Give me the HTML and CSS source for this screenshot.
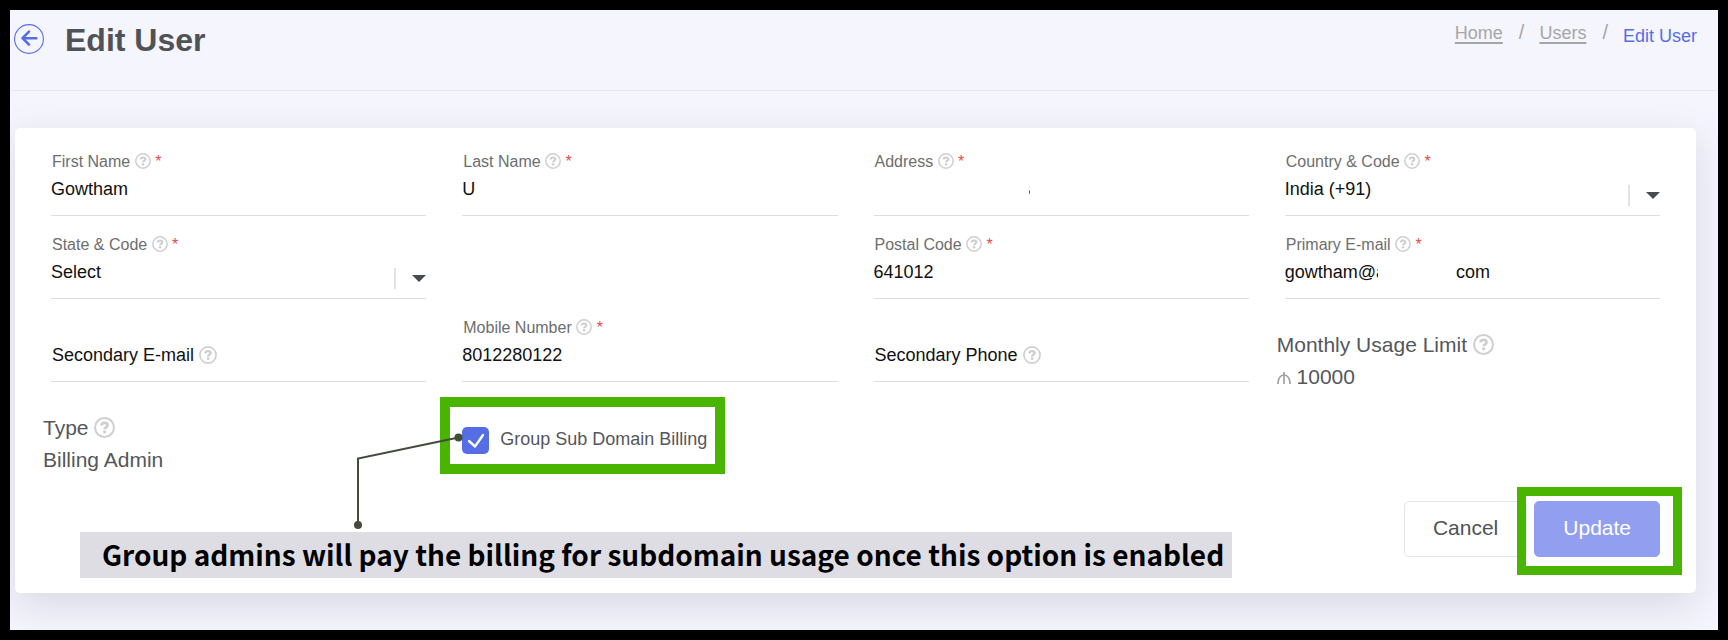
FILE: index.html
```html
<!DOCTYPE html>
<html lang="en">
<head>
<meta charset="utf-8">
<meta name="viewport" content="width=device-width, initial-scale=1">
<title>Edit User</title>
<link rel="stylesheet" href="styles.css">
</head>
<body>
<svg width="0" height="0" class="defs" aria-hidden="true">
  <symbol id="help" viewBox="0 0 16 16">
    <circle cx="8" cy="8" r="7.2" fill="none" stroke="#cfcfcf" stroke-width="1.500"/>
    <path d="M5.700 6.500C5.800 5 6.800 4.500 8 4.500c1.400 0 2.300.7 2.300 1.800 0 1.600-2.200 1.500-2.200 3" fill="none" stroke="#cfcfcf" stroke-width="2.100"/>
    <circle cx="8.100" cy="11.300" r="1.250" fill="#cfcfcf"/>
  </symbol>
</svg>
<header class="topbar">
  <a class="back" href="#" aria-label="Back">
    <svg viewBox="0 0 30 30"><circle cx="15" cy="15" r="14.400" fill="none" stroke="#556ee6" stroke-width="1.100"/><path d="M22.300 14.200H9M15 7.700l-6.500 6.500 6.500 6.500" fill="none" stroke="#556ee6" stroke-width="2.600" stroke-linecap="round" stroke-linejoin="round"/></svg>
  </a>
  <h1 class="title">Edit User</h1>
  <nav class="crumbs" aria-label="Breadcrumb">
    <a href="#">Home</a><span class="slash">/</span><a href="#">Users</a><span class="slash">/</span><span class="current">Edit User</span>
  </nav>
</header>
<main>
  <form class="card">
    <div class="fields">
      <div class="field">
        <label for="first">First Name <svg class="help"><use href="#help"/></svg> <b>*</b></label>
        <input id="first" type="text" value="Gowtham">
      </div>
      <div class="field">
        <label for="last">Last Name <svg class="help"><use href="#help"/></svg> <b>*</b></label>
        <input id="last" type="text" value="U">
      </div>
      <div class="field masked masked-address">
        <label for="address">Address <svg class="help"><use href="#help"/></svg> <b>*</b></label>
        <input id="address" type="text" value="                               a">
      </div>
      <div class="field select">
        <label for="country">Country &amp; Code <svg class="help"><use href="#help"/></svg> <b>*</b></label>
        <select id="country"><option>India (+91)</option></select>
      </div>
      <div class="field select">
        <label for="state">State &amp; Code <svg class="help"><use href="#help"/></svg> <b>*</b></label>
        <select id="state"><option>Select</option></select>
      </div>
      <div class="field third">
        <label for="postal">Postal Code <svg class="help"><use href="#help"/></svg> <b>*</b></label>
        <input id="postal" type="text" value="641012">
      </div>
      <div class="field masked masked-email">
        <label for="email">Primary E-mail <svg class="help"><use href="#help"/></svg> <b>*</b></label>
        <input id="email" type="text" value="gowtham@a              com">
      </div>
      <div class="field empty">
        <label for="email2">Secondary E-mail <svg class="help"><use href="#help"/></svg></label>
        <input id="email2" type="text">
      </div>
      <div class="field">
        <label for="mobile">Mobile Number <svg class="help"><use href="#help"/></svg> <b>*</b></label>
        <input id="mobile" type="text" value="8012280122">
      </div>
      <div class="field empty">
        <label for="phone2">Secondary Phone <svg class="help"><use href="#help"/></svg></label>
        <input id="phone2" type="text">
      </div>
      <div class="info usage">
        <div>Monthly Usage Limit <svg class="help"><use href="#help"/></svg></div>
        <div><svg class="coin" viewBox="0 0 14 12"><path d="M1 12C.8 7 3.200 3 7 3s6.200 4 6 9M7 0v12" fill="none" stroke="#a0a0a0" stroke-width="1.700"/></svg> 10000</div>
      </div>
      <div class="info">
        <div>Type <svg class="help"><use href="#help"/></svg></div>
        <div>Billing Admin</div>
      </div>
      <label class="check"><input type="checkbox" checked><span>Group Sub Domain Billing</span></label>
    </div>
    <div class="actions">
      <button type="button" class="btn">Cancel</button>
      <span class="marked"><button type="submit" class="btn primary">Update</button></span>
    </div>
    <svg class="connector" viewBox="0 0 114 98" aria-hidden="true"><path d="M105.500 6.500L5 27.500V91" fill="none" stroke="#434b3b" stroke-width="2"/><circle cx="105.500" cy="6.500" r="4" fill="#434b3b"/><circle cx="5" cy="94" r="4" fill="#434b3b"/></svg>
    <p class="note">Group admins will pay the billing for subdomain usage once this option is enabled</p>
  </form>
</main>
</body>
</html>
```
FILE: styles.css
```css
* { box-sizing: border-box; }
body {
  margin: 0;
  min-height: 100vh;
  border: 10px solid #000;
  background: #f5f5fe;
  color: #55575c;
  font-family: "Liberation Sans", Arial, sans-serif;
  font-size: 18px;
  overflow: hidden;
}
.defs { position: absolute; }
.topbar {
  display: flex;
  align-items: flex-start;
  height: 81px;
  padding: 10px 21px 0 4px;
  border-bottom: 1px solid #e6e7ef;
}
.back { width: 30px; height: 30px; margin-top: 4px; }
.back svg { display: block; width: 30px; height: 30px; }
.title {
  margin: 0 auto 0 21px;
  color: #505356;
  font-size: 32px;
  line-height: 40px;
}
.crumbs { display: flex; line-height: 26px; }
.crumbs a { color: #a6a6a6; text-underline-offset: 3px; text-decoration-thickness: 2px; }
.slash { padding: 0 15px 0 16px; color: #a6a6a6; font-size: 20px; line-height: 24px; }
.current { padding-top: 3px; color: #556ee6; }
main { padding: 37px 22px 37px 5px; }
.card {
  position: relative;
  padding: 5px 36px 36px;
  border-radius: 5px;
  background: #fff;
  box-shadow: 0 12px 40px rgba(18, 20, 30, 0.13);
}
.fields {
  display: grid;
  grid-template-columns: repeat(4, minmax(0, 1fr));
  grid-template-rows: repeat(3, 83px) auto;
  column-gap: 36px;
}
.field {
  position: relative;
  display: grid;
  grid-template-rows: 20px 1fr;
  row-gap: 3px;
  padding-top: 19px;
  border-bottom: 1px solid #dcdfe2;
}
.field label {
  padding-left: 1px;
  color: #6e6e6e;
  font-size: 16px;
  line-height: 20px;
}
.field b { color: #e64b4b; font-weight: 400; }
.field input, .field select {
  width: 100%;
  height: 28px;
  margin: 0;
  padding: 0;
  border: 0;
  background: transparent;
  color: #111;
  font: inherit;
  line-height: 28px;
  appearance: none;
}
.third { grid-column: 3; }
.empty label, .empty input { grid-area: 2 / 1; }
.field.empty label { color: #111; font-size: 18px; line-height: 28px; }
.help { width: 16px; height: 16px; vertical-align: -2px; }
.empty .help { width: 18px; height: 18px; vertical-align: -3px; }
.select::before {
  content: "";
  position: absolute;
  right: 30px;
  bottom: 9px;
  width: 2px;
  height: 21px;
  background: #e2e2e2;
}
.select::after {
  content: "";
  position: absolute;
  right: 0;
  bottom: 16px;
  border: 7px solid transparent;
  border-top-color: #484b4e;
  border-bottom: 0;
}
.masked::after {
  content: "";
  position: absolute;
  top: 44px;
  height: 26px;
  background: #fff;
}
.masked-address::after { left: 156px; width: 12px; }
.masked-email::after { left: 93px; width: 72px; }
.info { margin-left: -8px; padding-top: 30px; font-size: 21px; line-height: 32px; }
.info .help { width: 21px; height: 21px; vertical-align: -3px; }
.usage { grid-row: 3 / span 2; grid-column: 4; }
.coin { width: 14px; height: 12px; }
.check {
  position: relative;
  display: flex;
  align-items: center;
  justify-self: start;
  gap: 11px;
  height: 27px;
  margin-top: 45px;
}
.check span { line-height: 28px; padding-bottom: 4px; }
.check input {
  width: 27px;
  height: 27px;
  margin: 0;
  border-radius: 5px;
  appearance: none;
  background: #556ee6;
}
.check input:checked {
  background: #556ee6 url("data:image/svg+xml,%3Csvg xmlns='http://www.w3.org/2000/svg' viewBox='0 0 27 27'%3E%3Cpath d='M7 14l6 5.500L21 8' fill='none' stroke='white' stroke-width='2.400' stroke-linecap='round' stroke-linejoin='round'/%3E%3C/svg%3E") center / 27px;
}
.check::before, .marked::after {
  content: "";
  position: absolute;
  pointer-events: none;
  border: 9px solid #49b500;
}
.check::before { inset: -30px -18px -20px -22px; border-width: 10px; }
.marked { position: relative; }
.marked::after { inset: -14px -22px -18px -17px; }
.actions { display: flex; justify-content: flex-end; gap: 7px; margin-top: 25px; }
.btn {
  display: block;
  height: 56px;
  padding: 0 28px 3px;
  border: 1px solid #e4e5e9;
  border-radius: 5px;
  background: #fff;
  color: #505356;
  font: inherit;
  font-size: 21px;
}
.primary { border-color: #929ff0; background: #929ff0; color: #fff; }
.connector { position: absolute; left: 338px; top: 303px; width: 114px; height: 98px; z-index: 1; }
.note {
  position: absolute;
  left: 65px;
  bottom: 15px;
  margin: 0;
  padding: 0 8px 2px 22px;
  background: #dedde3;
  color: #000;
  font-family: "Noto Sans CJK SC", sans-serif;
  font-size: 28px;
  font-weight: 700;
  line-height: 44px;
  white-space: nowrap;
}
```
